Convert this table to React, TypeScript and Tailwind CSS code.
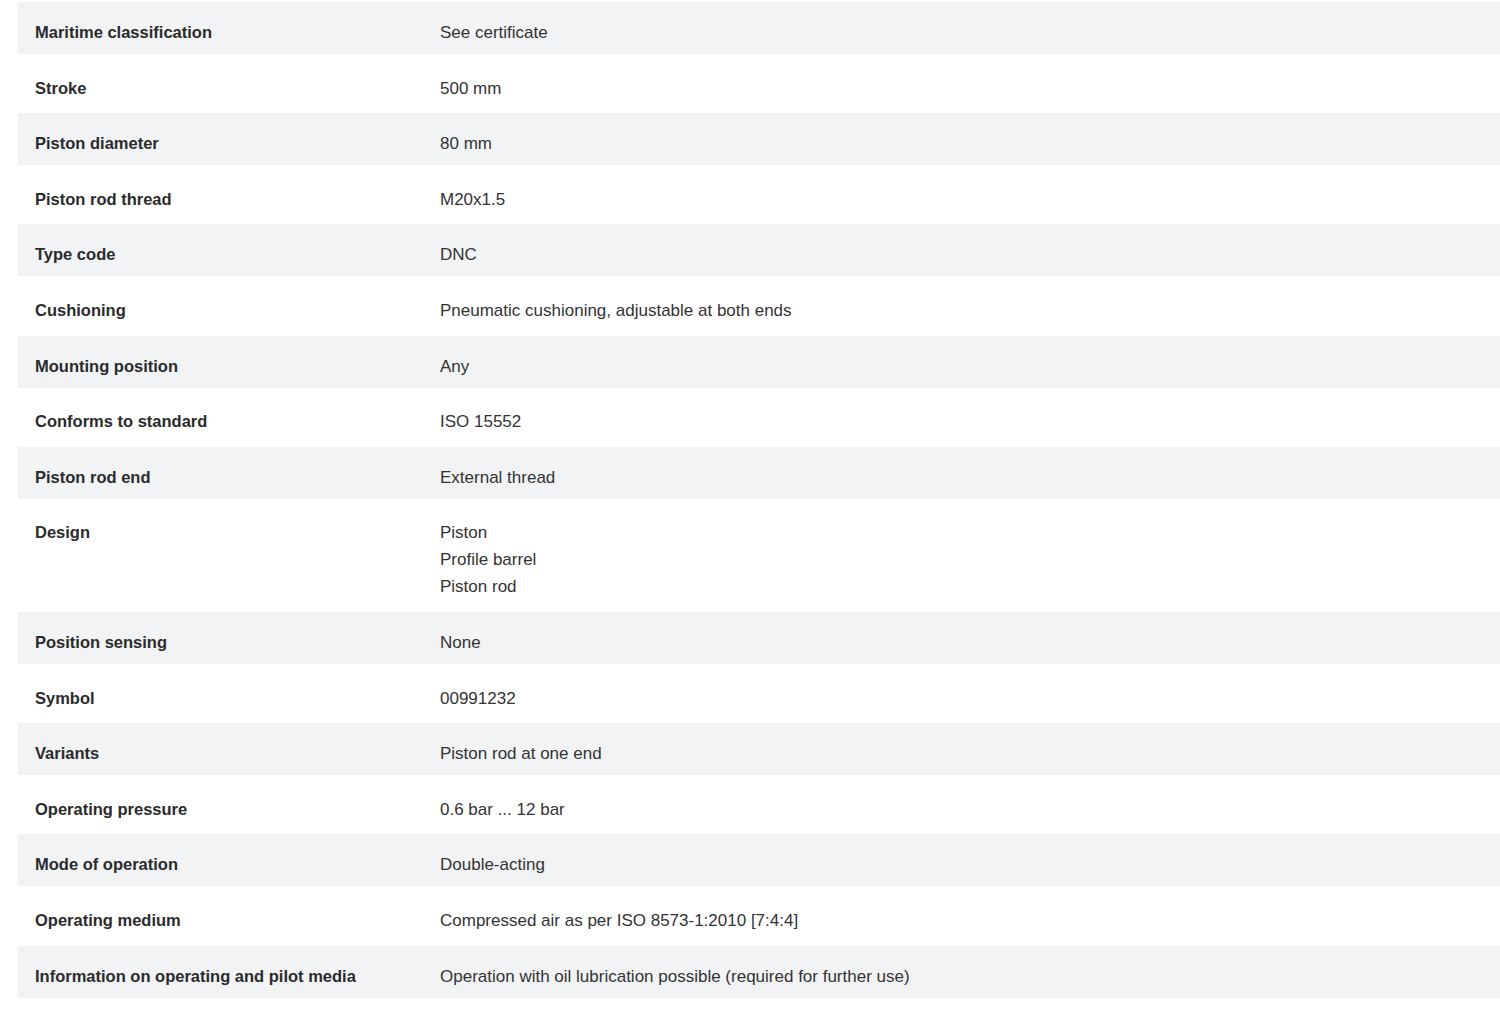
import React from "react";

const rows: [string, string[]][] = [
  ["Maritime classification", ["See certificate"]],
  ["Stroke", ["500 mm"]],
  ["Piston diameter", ["80 mm"]],
  ["Piston rod thread", ["M20x1.5"]],
  ["Type code", ["DNC"]],
  ["Cushioning", ["Pneumatic cushioning, adjustable at both ends"]],
  ["Mounting position", ["Any"]],
  ["Conforms to standard", ["ISO 15552"]],
  ["Piston rod end", ["External thread"]],
  ["Design", ["Piston", "Profile barrel", "Piston rod"]],
  ["Position sensing", ["None"]],
  ["Symbol", ["00991232"]],
  ["Variants", ["Piston rod at one end"]],
  ["Operating pressure", ["0.6 bar ... 12 bar"]],
  ["Mode of operation", ["Double-acting"]],
  ["Operating medium", ["Compressed air as per ISO 8573-1:2010 [7:4:4]"]],
  ["Information on operating and pilot media", ["Operation with oil lubrication possible (required for further use)"]],
];

export default function App() {
  return (
    <div
      className="w-[1500px] h-[1013px] bg-white overflow-hidden pt-[2px] pl-[18px] text-[#333333]"
      style={{ fontFamily: '"Liberation Sans", Arial, sans-serif' }}
    >
      <div className="flex flex-col gap-[3.6px]">
        {rows.map(([label, values], i) => (
          <div
            key={label}
            className={`flex pt-[17px] pb-[8px] leading-[27px] text-[17px] ${i % 2 === 0 ? "bg-[#f1f3f5]" : "bg-white"}`}
          >
            <div className="w-[405px] pl-[17px] font-bold text-[16.5px] text-[#2b2b2b]">{label}</div>
            <div className="pl-[17px]">
              {values.map((v) => (
                <div key={v}>{v}</div>
              ))}
            </div>
          </div>
        ))}
      </div>
    </div>
  );
}
